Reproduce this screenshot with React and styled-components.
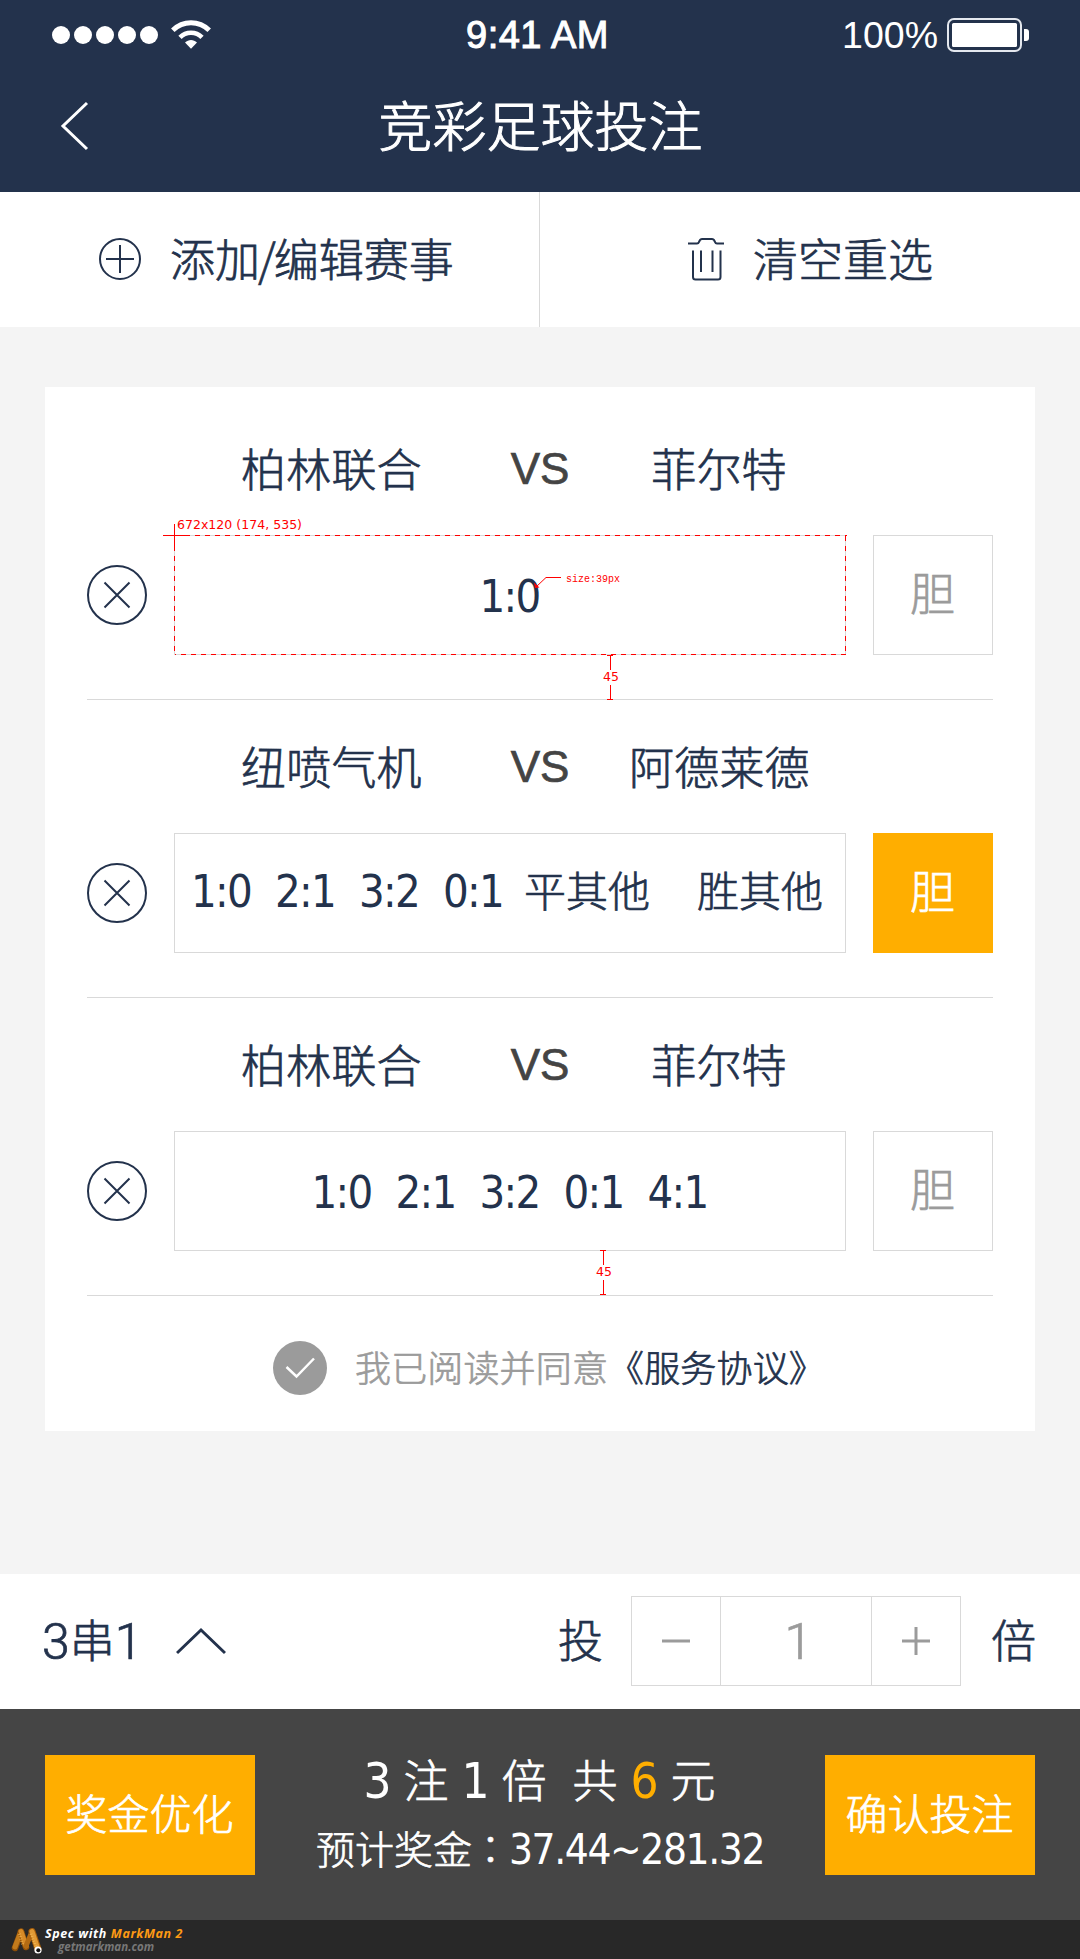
import React from "react";
import styled, { createGlobalStyle } from "styled-components";

const NAVY = "#23324c";
const GREY = "#9b9b9b";
const LINE = "#d9d9d9";
const ORANGE = "#ffae00";
const CJK = '"Noto Sans CJK SC", sans-serif';
const DIGITS = '"DejaVu Sans Condensed", "DejaVu Sans", sans-serif';

const GlobalStyle = createGlobalStyle`
  *, *::before, *::after { box-sizing: border-box; }
  body { margin: 0; background: #f4f4f4; }
  button { font: inherit; color: inherit; background: none; border: 0; padding: 0; margin: 0; letter-spacing: inherit; }
  svg { display: block; flex: none; }
`;

const Page = styled.div`
  width: 1080px;
  height: 1959px;
  display: flex;
  flex-direction: column;
  background: #f4f4f4;
  color: ${NAVY};
  font: 300 45px/60px ${CJK};
  -webkit-text-stroke: 0.7px currentColor;
  white-space: nowrap;
  overflow: hidden;
`;

const Header = styled.header`
  height: 192px;
  flex: none;
  background: ${NAVY};
  color: #fff;
`;
const StatusBar = styled.div`
  height: 68px;
  padding: 1px 51px 0 52px;
  display: grid;
  grid-template-columns: 1fr auto 1fr;
  align-items: center;
  font: 400 37.5px/40px "Liberation Sans", Arial, sans-serif;
  -webkit-text-stroke: 0;
`;
const Signal = styled.div`
  display: flex;
  align-items: center;
  gap: 13px;
`;
const Dots = styled.div`
  display: flex;
  gap: 4px;
`;
const Dot = styled.span`
  width: 18px;
  height: 18px;
  border-radius: 50%;
  background: #fff;
`;
const Clock = styled.span`
  padding-right: 6px;
  font-size: 38px;
  letter-spacing: 0.5px;
  -webkit-text-stroke: 1px #fff;
`;
const Power = styled.div`
  display: flex;
  justify-content: flex-end;
  align-items: center;
  gap: 9px;
`;
const TitleBar = styled.div`
  height: 116px;
  padding: 0 60px;
  display: grid;
  grid-template-columns: 30px 1fr 30px;
  align-items: center;
`;
const Title = styled.h1`
  margin: 0;
  padding: 0 0 4px 1px;
  font: 300 54px/72px ${CJK};
  -webkit-text-stroke: 1px #fff;
  text-align: center;
`;

const Toolbar = styled.nav`
  height: 135px;
  flex: none;
  display: grid;
  grid-template-columns: 540px 540px;
  background: #fff;
`;
const Tool = styled.button`
  display: flex;
  align-items: center;
  gap: 29px;
  padding: 0 0 1px ${(p) => p.$left}px;
  border-right: ${(p) => (p.$divided ? `1px solid ${LINE}` : "0")};
`;
const Label = styled.span`
  padding-bottom: 2px;
`;
const Slash = styled.span`
  margin: 0 -2px;
`;

const Card = styled.main`
  width: 990px;
  height: 1044px;
  margin: 60px 45px 0;
  flex: none;
  padding: 0 42px;
  background: #fff;
`;
const Match = styled.section`
  position: relative;
  height: ${(p) => (p.$first ? 313 : 298)}px;
  padding-top: ${(p) => (p.$first ? 51 : 36)}px;
  border-bottom: 1px solid ${LINE};
`;
const Teams = styled.div`
  height: 97px;
  padding-left: 154px;
  display: grid;
  grid-template-columns: 180px 89px 60px 59px 180px;
  letter-spacing: 0.2px;
  text-align: center;
`;
const Versus = styled.span`
  grid-column: 3;
  font: 400 44px/62px "Liberation Sans", Arial, sans-serif;
  letter-spacing: 0;
  color: #444;
  -webkit-text-stroke: 0.7px #444;
`;
const Away = styled.span`
  grid-column: 5;
`;
const Picks = styled.div`
  display: flex;
  align-items: center;
  height: 120px;
`;
const Remove = styled.button`
  width: 60px;
  height: 60px;
  margin-right: 27px;
`;
const Options = styled.div`
  width: 672px;
  height: 120px;
  margin-right: 27px;
  padding: 0 ${(p) => (p.$raised ? 6 : 1)}px ${(p) => (p.$raised ? 5 : 0)}px 0;
  border: 1px solid ${LINE};
  display: flex;
  align-items: center;
  justify-content: center;
  gap: 24px;
`;
const Score = styled.span`
  width: 60px;
  padding-top: 3px;
  display: flex;
  justify-content: center;
  font: 400 condensed 45px/60px ${DIGITS};
  letter-spacing: -1.7px;
  -webkit-text-stroke: 0;
`;
const Outcome = styled.span`
  font-size: 42px;
  padding-bottom: 3px;
  margin-left: ${(p) => p.$before}px;
`;
const Banker = styled.button`
  width: 120px;
  height: 120px;
  padding: 0 1px 6px 0;
  border: 1px solid ${(p) => (p.$on ? ORANGE : LINE)};
  background: ${(p) => (p.$on ? ORANGE : "#fff")};
  color: ${(p) => (p.$on ? "#fff" : GREY)};
`;

const Agreement = styled.div`
  height: 144px;
  padding-left: 186px;
  display: flex;
  align-items: center;
  gap: 28px;
  font-size: 36px;
  letter-spacing: 0.15px;
  color: ${GREY};
`;
const AgreementText = styled.span`
  padding-bottom: 4px;
`;
const Terms = styled.a`
  color: ${NAVY};
`;

const BetBar = styled.div`
  height: 135px;
  margin-top: auto;
  flex: none;
  padding: 0 44px 2px 42px;
  display: flex;
  align-items: center;
  background: #fff;
`;
const Combo = styled.span`
  display: flex;
  align-items: center;
`;
const ThinDigit = styled.span`
  padding-top: 2px;
  font: 300 50px/60px Roboto, sans-serif;
`;
const ComboArrow = styled.button`
  margin-left: 34px;
`;
const Times = styled.div`
  margin-left: auto;
  display: flex;
  align-items: center;
  gap: 29px;
`;
const Unit = styled.span`
  padding-bottom: 3px;
`;
const Stepper = styled.div`
  width: 330px;
  height: 90px;
  margin: 0 1px 0 -1px;
  display: grid;
  grid-template-columns: 88px 1fr 88px;
  border: 1px solid ${LINE};
  color: ${GREY};
`;
const StepButton = styled.button`
  display: grid;
  place-items: center;
`;
const StepValue = styled.span`
  display: grid;
  place-items: center;
  padding-left: 5px;
  border-left: 1px solid ${LINE};
  border-right: 1px solid ${LINE};
`;

const Checkout = styled.footer`
  height: 211px;
  flex: none;
  padding: 46px 45px 0;
  display: flex;
  justify-content: space-between;
  align-items: flex-start;
  background: #454545;
  color: #fff;
`;
const Action = styled.button`
  width: 210px;
  height: 120px;
  padding: 0 1px 6px 0;
  background: ${ORANGE};
  font-size: 42px;
`;
const Summary = styled.div`
  display: flex;
  flex-direction: column;
  align-items: center;
`;
const Totals = styled.div`
  display: flex;
  align-items: center;
  height: 48px;
`;
const Num = styled.span`
  width: 26px;
  margin: 0 ${(p) => p.$after ?? 14}px 0 ${(p) => p.$before ?? 14}px;
  padding-top: 6px;
  display: flex;
  justify-content: center;
  font: 400 condensed 49px/48px ${DIGITS};
  -webkit-text-stroke: 0;
  color: ${(p) => (p.$hot ? ORANGE : "#fff")};
`;
const Word = styled.span`
  margin-right: ${(p) => p.$after ?? 0}px;
`;
const Prize = styled.div`
  height: 60px;
  margin-top: 14px;
  display: flex;
  align-items: center;
  font-size: 39px;
`;
const Colon = styled.span`
  margin: 0 -1px 0 -1px;
  font-family: "Noto Sans CJK TC", sans-serif;
`;
const Amount = styled.span`
  padding-top: 5px;
  font: 400 condensed 42px/60px ${DIGITS};
  letter-spacing: -1.4px;
  -webkit-text-stroke: 0;
`;

const Credit = styled.div`
  height: 39px;
  flex: none;
  padding: 7px 0 0 11px;
  display: flex;
  gap: 2px;
  background: #282828;
  font: italic 700 12.5px/14px "Open Sans", sans-serif;
  color: #fff;
  -webkit-text-stroke: 0;
`;
const CreditText = styled.div`
  display: flex;
  flex-direction: column;
  letter-spacing: 0.6px;
`;
const Brand = styled.span`
  color: #ff9a14;
`;
const Site = styled.span`
  padding-left: 13px;
  font-size: 11.5px;
  line-height: 12px;
  letter-spacing: 0;
  color: #777;
`;

const SizeMarks = styled.svg`
  position: absolute;
  left: 76px;
  top: 137px;
  overflow: visible;
  -webkit-text-stroke: 0;
`;
const GapMark = styled.svg`
  position: absolute;
  left: ${(p) => p.$x}px;
  bottom: ${(p) => p.$bottom}px;
  -webkit-text-stroke: 0;
`;

const CloseIcon = () => (
  <svg width="60" height="60" viewBox="0 0 60 60" fill="none" stroke={NAVY} strokeWidth="2">
    <circle cx="30" cy="30" r="29" />
    <path d="M17.5 17.5 42.5 42.5M42.5 17.5 17.5 42.5" />
  </svg>
);

const WifiIcon = () => (
  <svg width="40" height="30" viewBox="0 0 40 30" fill="none" stroke="#fff">
    <path d="M1.8 10.2C12 .2 28 .2 38.200 10.200" strokeWidth="5" />
    <path d="M9 17.300C15 11.300 25 11.300 31 17.300" strokeWidth="4.600" />
    <path d="M14 22.500C17.500 19 22.500 19 26 22.500L20 28.800Z" fill="#fff" stroke="none" />
  </svg>
);

const BatteryIcon = () => (
  <svg width="82" height="34" viewBox="0 0 82 34">
    <rect x="1" y="1" width="73" height="32" rx="6" fill="none" stroke="#e4e8ee" strokeWidth="2" />
    <rect x="5" y="5" width="65" height="24" rx="1.500" fill="#fff" />
    <path d="M77 11h2q3 0 3 3v6q0 3-3 3h-2z" fill="#fff" />
  </svg>
);

const TrashIcon = () => (
  <svg width="36" height="44" viewBox="0 0 36 44" fill="none" stroke={NAVY} strokeWidth="2">
    <path d="M0 6.500H9Q10.500 6.500 11 5L12 3Q12.500 2 14 2H24Q25.500 2 26 3L27 5Q27.500 6.500 29 6.500H36" />
    <path d="M5 13.500V40Q5 42.500 7.500 42.500H30Q32.500 42.500 32.500 40V13.500M13 13.500V35M24.500 13.500V35" />
  </svg>
);

const MascotIcon = () => (
  <svg width="32" height="28" viewBox="0 0 32 28" fill="none" strokeLinecap="round">
    <path d="M4 21 10 5" stroke="#8b4d08" strokeWidth="6.500" />
    <path d="M4 20 10 4.500" stroke="#c37b1c" strokeWidth="5" />
    <path d="M10 4.500 15 20" stroke="#965409" strokeWidth="6.500" />
    <path d="M10 4.500 15 19" stroke="#d78b28" strokeWidth="5" />
    <path d="M15 19 21 4.500" stroke="#b46b13" strokeWidth="5" />
    <path d="M21 4.500 27 22" stroke="#a55d0a" strokeWidth="7" />
    <path d="M21 4.500 26.500 21" stroke="#e19a35" strokeWidth="5" />
    <path d="M8.500 7 12 19M20 7 25 20" stroke="#f6c566" strokeWidth="3" strokeDasharray="0.500 2" strokeLinecap="butt" />
    <circle cx="27" cy="23" r="3.600" fill="#fff" />
    <circle cx="27.300" cy="23.300" r="2" fill="#111" />
  </svg>
);

const DimensionMarks = () => (
  <SizeMarks width="700" height="145" viewBox="0 0 700 145" fill="none" stroke="#f00" shapeRendering="crispEdges">
    <path d="M11.500 11.500H683.500" strokeDasharray="5 5" />
    <path d="M682.500 11.500V130.500" strokeDasharray="5 5" />
    <path d="M11.500 130.500H683.500" strokeDasharray="5 5" strokeDashoffset="4" />
    <path d="M11.500 11.500V130.500" strokeDasharray="5 5" />
    <path d="M0 11.500H27M11.500 0V27" />
    <path d="M383 53.500H398" />
    <path d="M373 63 383 53.500" shapeRendering="auto" />
    <path d="M371 58.500 372 64 376.500 63.500Z" fill="#f00" stroke="none" shapeRendering="auto" />
    <text x="14" y="5" fill="#f00" stroke="none" fontFamily="DejaVu Sans" fontSize="12.500" fontWeight="400" letterSpacing="0" textLength="125">672x120 (174, 535)</text>
    <text x="403" y="57.500" fill="#f00" stroke="none" fontFamily="Liberation Mono" fontSize="10" fontWeight="400" letterSpacing="0" textLength="54">size:39px</text>
  </SizeMarks>
);

const GapMarker = ({ x, bottom }) => (
  <GapMark $x={x} $bottom={bottom} width="18" height="45" viewBox="0 0 18 45" stroke="#f00" shapeRendering="crispEdges">
    <path d="M5 .500H11M5 44.500H11M8.500 0V15M8.500 30V45" fill="none" />
    <text x="9" y="26" fill="#f00" stroke="none" fontFamily="DejaVu Sans" fontSize="12.500" fontWeight="400" textAnchor="middle">45</text>
  </GapMark>
);

function MatchRow({ first, home, away, banker, raised, options, children }) {
  return (
    <Match $first={first}>
      <Teams>
        <span>{home}</span>
        <Versus>VS</Versus>
        <Away>{away}</Away>
      </Teams>
      <Picks>
        <Remove aria-label="删除"><CloseIcon /></Remove>
        <Options $raised={raised}>{options}</Options>
        <Banker $on={banker}>胆</Banker>
      </Picks>
      {children}
    </Match>
  );
}

const scores = (list) => list.map((s) => <Score key={s}>{s}</Score>);

export default function App() {
  return (
    <Page>
      <GlobalStyle />
      <Header>
        <StatusBar>
          <Signal>
            <Dots>{[0, 1, 2, 3, 4].map((i) => <Dot key={i} />)}</Dots>
            <WifiIcon />
          </Signal>
          <Clock>9:41 AM</Clock>
          <Power><span>100%</span><BatteryIcon /></Power>
        </StatusBar>
        <TitleBar>
          <svg width="30" height="50" viewBox="0 0 30 50" fill="none" stroke="#fff" strokeWidth="3">
            <path d="M27 2 3 25 27 48" />
          </svg>
          <Title>竞彩足球投注</Title>
        </TitleBar>
      </Header>

      <Toolbar>
        <Tool $left={99} $divided>
          <svg width="42" height="42" viewBox="0 0 42 42" fill="none" stroke={NAVY} strokeWidth="2">
            <circle cx="21" cy="21" r="20" />
            <path d="M7 21H35M21 7V35" />
          </svg>
          <Label>添加<Slash>/</Slash>编辑赛事</Label>
        </Tool>
        <Tool $left={148}>
          <TrashIcon />
          <Label>清空重选</Label>
        </Tool>
      </Toolbar>

      <Card>
        <MatchRow first home="柏林联合" away="菲尔特" options={scores(["1:0"])}>
          <DimensionMarks />
          <GapMarker x={515} bottom={-1} />
        </MatchRow>
        <MatchRow
          home="纽喷气机"
          away="阿德莱德"
          banker
          raised
          options={
            <>
              {scores(["1:0", "2:1", "3:2", "0:1"])}
              <Outcome $before={-3}>平其他</Outcome>
              <Outcome $before={23}>胜其他</Outcome>
            </>
          }
        />
        <MatchRow home="柏林联合" away="菲尔特" options={scores(["1:0", "2:1", "3:2", "0:1", "4:1"])}>
          <GapMarker x={508} bottom={0} />
        </MatchRow>
        <Agreement>
          <svg width="54" height="54" viewBox="0 0 54 54" fill="none">
            <circle cx="27" cy="27" r="27" fill={GREY} />
            <path d="M13.500 26 23.500 35.500 41 17.500" stroke="#fff" strokeWidth="2.500" />
          </svg>
          <AgreementText>我已阅读并同意<Terms>《服务协议》</Terms></AgreementText>
        </Agreement>
      </Card>

      <BetBar>
        <Combo>
          <ThinDigit>3</ThinDigit><Unit>串</Unit><ThinDigit>1</ThinDigit>
          <ComboArrow aria-label="展开">
            <svg width="50" height="28" viewBox="0 0 50 28" fill="none" stroke={NAVY} strokeWidth="3">
              <path d="M1 26 25 3 49 26" />
            </svg>
          </ComboArrow>
        </Combo>
        <Times>
          <Unit>投</Unit>
          <Stepper>
            <StepButton aria-label="减">
              <svg width="28" height="28" viewBox="0 0 28 28" stroke={GREY} strokeWidth="3"><path d="M0 14H28" /></svg>
            </StepButton>
            <StepValue><ThinDigit>1</ThinDigit></StepValue>
            <StepButton aria-label="加">
              <svg width="28" height="28" viewBox="0 0 28 28" stroke={GREY} strokeWidth="3"><path d="M0 14H28M14 0V28" /></svg>
            </StepButton>
          </Stepper>
          <Unit>倍</Unit>
        </Times>
      </BetBar>

      <Checkout>
        <Action>奖金优化</Action>
        <Summary>
          <Totals>
            <Num $before={0} $after={13}>3</Num>
            <Word>注</Word>
            <Num $after={13}>1</Num>
            <Word $after={26}>倍</Word>
            <Word>共</Word>
            <Num $hot $before={14} $after={13}>6</Num>
            <Word>元</Word>
          </Totals>
          <Prize>预计奖金<Colon>：</Colon><Amount>37.44~281.32</Amount></Prize>
        </Summary>
        <Action>确认投注</Action>
      </Checkout>

      <Credit>
        <MascotIcon />
        <CreditText>
          <span>Spec with <Brand>MarkMan 2</Brand></span>
          <Site>getmarkman.com</Site>
        </CreditText>
      </Credit>
    </Page>
  );
}
